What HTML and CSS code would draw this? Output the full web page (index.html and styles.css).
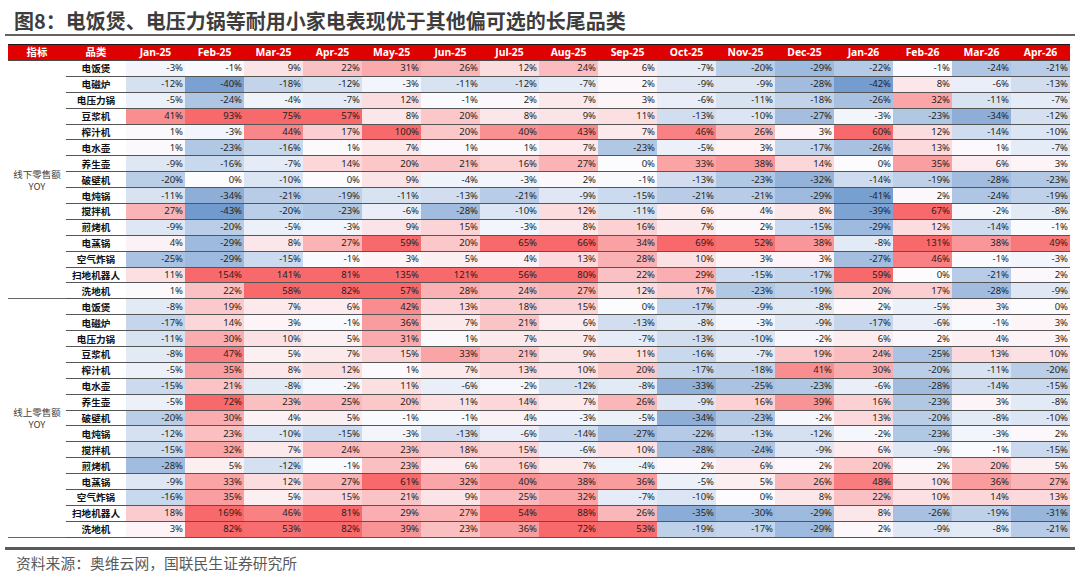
FILE: index.html
```html
<!DOCTYPE html>
<html lang="zh-CN">
<head>
<meta charset="utf-8">
<title>图8</title>
<link rel="stylesheet" href="styles.css">
</head>
<body>
<div class="page">
<h1 class="title">图8：电饭煲、电压力锅等耐用小家电表现优于其他偏可选的长尾品类</h1>
<table class="grid">
<colgroup><col class="c-ind"><col class="c-cat"><col span="16" class="c-m"></colgroup>
<thead>
<tr><th>指标</th><th>品类</th><th>Jan-25</th><th>Feb-25</th><th>Mar-25</th><th>Apr-25</th><th>May-25</th><th>Jun-25</th><th>Jul-25</th><th>Aug-25</th><th>Sep-25</th><th>Oct-25</th><th>Nov-25</th><th>Dec-25</th><th>Jan-26</th><th>Feb-26</th><th>Mar-26</th><th>Apr-26</th></tr>
</thead>
<tbody>
<tr><td class="ind" rowspan="15">线下零售额<br>YOY</td><td class="cat">电饭煲</td><td>-3%</td><td>-1%</td><td>9%</td><td>22%</td><td>31%</td><td>26%</td><td>12%</td><td>24%</td><td>6%</td><td>-7%</td><td>-20%</td><td>-29%</td><td>-22%</td><td>-1%</td><td>-24%</td><td>-21%</td></tr>
<tr><td class="cat">电磁炉</td><td>-12%</td><td>-40%</td><td>-18%</td><td>-12%</td><td>-3%</td><td>-11%</td><td>-12%</td><td>-7%</td><td>2%</td><td>-9%</td><td>-9%</td><td>-28%</td><td>-42%</td><td>8%</td><td>-6%</td><td>-13%</td></tr>
<tr><td class="cat">电压力锅</td><td>-5%</td><td>-24%</td><td>-4%</td><td>-7%</td><td>12%</td><td>-1%</td><td>2%</td><td>7%</td><td>3%</td><td>-6%</td><td>-11%</td><td>-18%</td><td>-26%</td><td>32%</td><td>-11%</td><td>-7%</td></tr>
<tr><td class="cat">豆浆机</td><td>41%</td><td>93%</td><td>75%</td><td>57%</td><td>8%</td><td>20%</td><td>8%</td><td>9%</td><td>11%</td><td>-13%</td><td>-10%</td><td>-27%</td><td>-3%</td><td>-23%</td><td>-34%</td><td>-12%</td></tr>
<tr><td class="cat">榨汁机</td><td>1%</td><td>-3%</td><td>44%</td><td>17%</td><td>100%</td><td>20%</td><td>40%</td><td>43%</td><td>7%</td><td>46%</td><td>26%</td><td>3%</td><td>60%</td><td>12%</td><td>-14%</td><td>-10%</td></tr>
<tr><td class="cat">电水壶</td><td>1%</td><td>-23%</td><td>-16%</td><td>1%</td><td>7%</td><td>1%</td><td>1%</td><td>7%</td><td>-23%</td><td>-5%</td><td>3%</td><td>-17%</td><td>-26%</td><td>13%</td><td>1%</td><td>-7%</td></tr>
<tr><td class="cat">养生壶</td><td>-9%</td><td>-16%</td><td>-7%</td><td>14%</td><td>20%</td><td>21%</td><td>16%</td><td>27%</td><td>0%</td><td>33%</td><td>38%</td><td>14%</td><td>0%</td><td>35%</td><td>6%</td><td>3%</td></tr>
<tr><td class="cat">破壁机</td><td>-20%</td><td>0%</td><td>-10%</td><td>0%</td><td>9%</td><td>-4%</td><td>-3%</td><td>2%</td><td>-1%</td><td>-13%</td><td>-23%</td><td>-32%</td><td>-14%</td><td>-19%</td><td>-28%</td><td>-23%</td></tr>
<tr><td class="cat">电炖锅</td><td>-11%</td><td>-34%</td><td>-21%</td><td>-19%</td><td>-11%</td><td>-13%</td><td>-21%</td><td>-9%</td><td>-15%</td><td>-21%</td><td>-21%</td><td>-29%</td><td>-41%</td><td>2%</td><td>-24%</td><td>-19%</td></tr>
<tr><td class="cat">搅拌机</td><td>27%</td><td>-43%</td><td>-20%</td><td>-23%</td><td>-6%</td><td>-28%</td><td>-10%</td><td>12%</td><td>-11%</td><td>6%</td><td>4%</td><td>8%</td><td>-39%</td><td>67%</td><td>-2%</td><td>-8%</td></tr>
<tr><td class="cat">煎烤机</td><td>-9%</td><td>-20%</td><td>-5%</td><td>-3%</td><td>9%</td><td>15%</td><td>-3%</td><td>8%</td><td>16%</td><td>7%</td><td>2%</td><td>-15%</td><td>-29%</td><td>12%</td><td>-14%</td><td>-1%</td></tr>
<tr><td class="cat">电蒸锅</td><td>4%</td><td>-29%</td><td>8%</td><td>27%</td><td>59%</td><td>20%</td><td>65%</td><td>66%</td><td>34%</td><td>69%</td><td>52%</td><td>38%</td><td>-8%</td><td>131%</td><td>38%</td><td>49%</td></tr>
<tr><td class="cat">空气炸锅</td><td>-25%</td><td>-29%</td><td>-15%</td><td>-1%</td><td>3%</td><td>5%</td><td>4%</td><td>13%</td><td>28%</td><td>10%</td><td>3%</td><td>3%</td><td>-27%</td><td>46%</td><td>-1%</td><td>-3%</td></tr>
<tr><td class="cat">扫地机器人</td><td>11%</td><td>154%</td><td>141%</td><td>81%</td><td>135%</td><td>121%</td><td>56%</td><td>80%</td><td>22%</td><td>29%</td><td>-15%</td><td>-17%</td><td>59%</td><td>0%</td><td>-21%</td><td>2%</td></tr>
<tr><td class="cat">洗地机</td><td>1%</td><td>22%</td><td>58%</td><td>82%</td><td>57%</td><td>28%</td><td>24%</td><td>27%</td><td>12%</td><td>17%</td><td>-23%</td><td>-19%</td><td>20%</td><td>17%</td><td>-28%</td><td>-9%</td></tr>
<tr><td class="ind" rowspan="15">线上零售额<br>YOY</td><td class="cat">电饭煲</td><td>-8%</td><td>19%</td><td>7%</td><td>6%</td><td>42%</td><td>13%</td><td>18%</td><td>15%</td><td>0%</td><td>-17%</td><td>-9%</td><td>-8%</td><td>2%</td><td>-5%</td><td>3%</td><td>0%</td></tr>
<tr><td class="cat">电磁炉</td><td>-17%</td><td>14%</td><td>3%</td><td>-1%</td><td>36%</td><td>7%</td><td>21%</td><td>6%</td><td>-13%</td><td>-8%</td><td>-3%</td><td>-9%</td><td>-17%</td><td>-6%</td><td>-1%</td><td>3%</td></tr>
<tr><td class="cat">电压力锅</td><td>-11%</td><td>30%</td><td>10%</td><td>5%</td><td>31%</td><td>1%</td><td>7%</td><td>7%</td><td>-7%</td><td>-13%</td><td>-10%</td><td>-2%</td><td>6%</td><td>2%</td><td>4%</td><td>3%</td></tr>
<tr><td class="cat">豆浆机</td><td>-8%</td><td>47%</td><td>5%</td><td>7%</td><td>15%</td><td>33%</td><td>21%</td><td>9%</td><td>11%</td><td>-16%</td><td>-7%</td><td>19%</td><td>24%</td><td>-25%</td><td>13%</td><td>10%</td></tr>
<tr><td class="cat">榨汁机</td><td>-5%</td><td>35%</td><td>8%</td><td>12%</td><td>1%</td><td>7%</td><td>13%</td><td>10%</td><td>20%</td><td>-17%</td><td>-18%</td><td>41%</td><td>30%</td><td>-20%</td><td>-11%</td><td>-20%</td></tr>
<tr><td class="cat">电水壶</td><td>-15%</td><td>21%</td><td>-8%</td><td>-2%</td><td>11%</td><td>-6%</td><td>-2%</td><td>-12%</td><td>-8%</td><td>-33%</td><td>-25%</td><td>-23%</td><td>-6%</td><td>-28%</td><td>-14%</td><td>-15%</td></tr>
<tr><td class="cat">养生壶</td><td>-5%</td><td>72%</td><td>23%</td><td>25%</td><td>20%</td><td>11%</td><td>14%</td><td>7%</td><td>26%</td><td>-9%</td><td>16%</td><td>39%</td><td>16%</td><td>-23%</td><td>3%</td><td>-8%</td></tr>
<tr><td class="cat">破壁机</td><td>-20%</td><td>30%</td><td>4%</td><td>5%</td><td>-1%</td><td>-1%</td><td>4%</td><td>-3%</td><td>-5%</td><td>-34%</td><td>-23%</td><td>-2%</td><td>13%</td><td>-20%</td><td>-8%</td><td>-10%</td></tr>
<tr><td class="cat">电炖锅</td><td>-12%</td><td>23%</td><td>-10%</td><td>-15%</td><td>-3%</td><td>-13%</td><td>-6%</td><td>-14%</td><td>-27%</td><td>-22%</td><td>-13%</td><td>-12%</td><td>-2%</td><td>-23%</td><td>-3%</td><td>2%</td></tr>
<tr><td class="cat">搅拌机</td><td>-15%</td><td>32%</td><td>7%</td><td>24%</td><td>23%</td><td>18%</td><td>15%</td><td>-6%</td><td>10%</td><td>-28%</td><td>-24%</td><td>-9%</td><td>6%</td><td>-9%</td><td>-1%</td><td>-15%</td></tr>
<tr><td class="cat">煎烤机</td><td>-28%</td><td>5%</td><td>-12%</td><td>-1%</td><td>23%</td><td>6%</td><td>16%</td><td>7%</td><td>-4%</td><td>2%</td><td>6%</td><td>2%</td><td>20%</td><td>2%</td><td>20%</td><td>5%</td></tr>
<tr><td class="cat">电蒸锅</td><td>-9%</td><td>33%</td><td>12%</td><td>27%</td><td>61%</td><td>32%</td><td>40%</td><td>38%</td><td>36%</td><td>-5%</td><td>5%</td><td>26%</td><td>48%</td><td>10%</td><td>36%</td><td>27%</td></tr>
<tr><td class="cat">空气炸锅</td><td>-16%</td><td>35%</td><td>5%</td><td>15%</td><td>21%</td><td>9%</td><td>25%</td><td>32%</td><td>-7%</td><td>-10%</td><td>0%</td><td>8%</td><td>22%</td><td>10%</td><td>14%</td><td>13%</td></tr>
<tr><td class="cat">扫地机器人</td><td>18%</td><td>169%</td><td>46%</td><td>81%</td><td>29%</td><td>27%</td><td>54%</td><td>88%</td><td>26%</td><td>-35%</td><td>-30%</td><td>-29%</td><td>8%</td><td>-26%</td><td>-19%</td><td>-31%</td></tr>
<tr><td class="cat">洗地机</td><td>3%</td><td>82%</td><td>53%</td><td>82%</td><td>39%</td><td>23%</td><td>36%</td><td>72%</td><td>53%</td><td>-19%</td><td>-17%</td><td>-29%</td><td>2%</td><td>-9%</td><td>-8%</td><td>-21%</td></tr>
</tbody>
</table>
<p class="source">资料来源：奥维云网，国联民生证券研究所</p>
</div>
<script src="script.js"></script>
</body>
</html>
```
FILE: styles.css
```css
body {
  margin: 0;
  background: #ffffff;
  font-family: "Noto Sans", "Noto Sans CJK SC", sans-serif;
}
.page {
  width: 1070px;
  padding: 0 5px;
}
.title {
  margin: 0;
  box-sizing: border-box;
  height: 36px;
  padding: 7px 0 0 9px;
  font-family: "Noto Sans CJK SC", sans-serif;
  font-size: 20px;
  line-height: 27px;
  font-weight: 700;
  color: #3d3d3d;
  border-bottom: 2px solid #636363;
}
.grid {
  margin: 8px 0 0 3px;
  width: 1062px;
  table-layout: fixed;
  border-collapse: separate;
  border-spacing: 0;
}
.c-ind { width: 58px; }
.c-cat { width: 60px; }
.c-m { width: 59px; }
.grid th {
  box-sizing: content-box;
  height: 15px;
  padding: 0;
  background: #df0000;
  color: #ffffff;
  font-family: "Noto Sans", "Noto Sans CJK SC", sans-serif;
  font-size: 10.4px;
  font-weight: 700;
  line-height: 15px;
  text-align: center;
  border-top: 1px solid #1a1a1a;
  border-bottom: 1px solid #4a4a4a;
}
.grid td {
  box-sizing: content-box;
  height: 14.9px;
  padding: 0 2px 0 0;
  font-size: 9.5px;
  line-height: 14px;
  color: #1f1f1f;
  text-align: right;
  white-space: nowrap;
  border-bottom: 1px solid #555555;
}
.grid td.cat {
  padding: 0;
  text-align: center;
  font-family: "Noto Sans CJK SC", sans-serif;
  font-weight: 700;
  font-size: 9.6px;
  color: #111111;
}
.grid td.ind {
  padding: 0;
  text-align: center;
  vertical-align: middle;
  font-family: "Noto Sans CJK SC", sans-serif;
  font-size: 9.5px;
  line-height: 12px;
  color: #404040;
  border-bottom: 1px solid #666666;
}
.source {
  margin: 9px 0 0;
  border-top: 3px solid #5a5a5a;
  padding: 3px 0 0 11px;
  font-family: "Noto Sans CJK SC", sans-serif;
  font-size: 14.8px;
  line-height: 20px;
  color: #595959;
}
```
FILE: script.js
```js
(function () {
  var mid = [252, 252, 255];
  var hi = [248, 105, 107];
  var lo = [90, 138, 198];
  var cells = document.querySelectorAll('.grid tbody td:not(.cat):not(.ind)');
  for (var i = 0; i < cells.length; i++) {
    var v = parseFloat(cells[i].textContent);
    var t, end;
    if (v >= 0) { t = Math.min(v / 55, 1); end = hi; }
    else { t = Math.min(-v / 50, 1); end = lo; }
    var rgb = [];
    for (var k = 0; k < 3; k++) rgb.push(Math.round(mid[k] + (end[k] - mid[k]) * t));
    cells[i].style.backgroundColor = 'rgb(' + rgb.join(',') + ')';
  }
})();
```
